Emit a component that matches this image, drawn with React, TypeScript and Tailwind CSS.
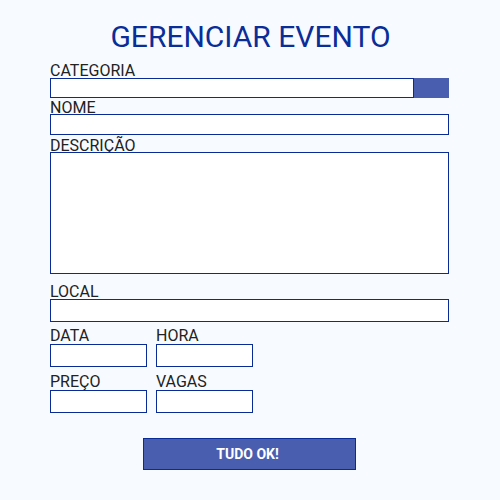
export default function App() {
  const label = 'block text-[16px] leading-[13px] text-[#222222]';
  const box = 'block w-full border border-[#0a2a96] bg-white outline-none';

  return (
    <main className="min-h-[500px] bg-[#f7fbff] font-['Roboto',sans-serif]">
      <div className="ml-[50px] flex w-[399px] flex-col pt-[22px]">
        <h1 className="ml-[2px] text-center text-[30px] leading-[30px] text-[#0b2d98]">GERENCIAR EVENTO</h1>

        <label className={`${label} mt-[12px]`}>CATEGORIA</label>
        <div className="mt-px flex h-[20px]">
          <select className="h-full flex-1 appearance-none border border-[#0a2a96] bg-white outline-none" />
          <div className="h-full w-[35px] bg-[#4a5eb0]" />
        </div>

        <label className={`${label} mt-[3px]`}>NOME</label>
        <input className={`${box} h-[21px]`} />

        <label className={`${label} mt-[4px]`}>DESCRIÇÃO</label>
        <textarea className={`${box} h-[122px] resize-none`} />

        <label className={`${label} mt-[11px]`}>LOCAL</label>
        <input className={`${box} mt-px h-[23px]`} />

        <div className="mt-[7px] flex gap-[9px]">
          <div className="w-[97px]">
            <label className={label}>DATA</label>
            <input className={`${box} mt-[2px] h-[23px]`} />
          </div>
          <div className="w-[97px]">
            <label className={label}>HORA</label>
            <input className={`${box} mt-[2px] h-[23px]`} />
          </div>
        </div>

        <div className="mt-[8px] flex gap-[9px]">
          <div className="w-[97px]">
            <label className={label}>PREÇO</label>
            <input className={`${box} mt-[2px] h-[23px]`} />
          </div>
          <div className="w-[97px]">
            <label className={label}>VAGAS</label>
            <input className={`${box} mt-[2px] h-[23px]`} />
          </div>
        </div>

        <button className="ml-[93px] mt-[25px] h-[32px] w-[213px] border border-[#0a2a96] bg-[#4a5eb0] pr-[4px] text-[14px] font-bold text-white">
          TUDO OK!
        </button>
      </div>
    </main>
  );
}
